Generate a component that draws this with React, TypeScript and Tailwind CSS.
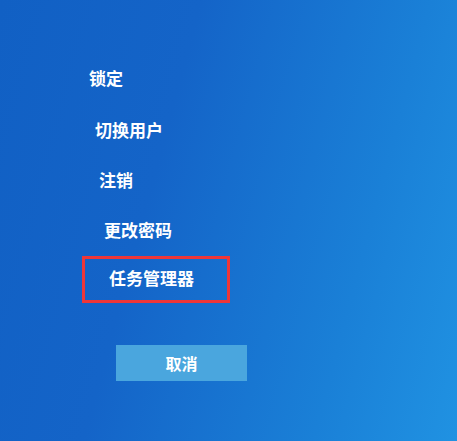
const App = () => {
  return (
    <div
      className="w-[457px] h-[441px] overflow-hidden flex flex-col items-start pt-[69px] text-white text-[17px] leading-[18px] font-semibold bg-[linear-gradient(105deg,#1160c4_0%,#1464c8_35%,#1a80d7_75%,#2092e2_100%)]"
      style={{ fontFamily: "'Noto Sans CJK SC', 'Noto Sans', sans-serif" }}
    >
      <div className="ml-[89px]">锁定</div>
      <div className="ml-[95px] mt-[34px]">切换用户</div>
      <div className="ml-[99px] mt-[32px]">注销</div>
      <div className="ml-[104px] mt-[32px]">更改密码</div>
      <div className="ml-[82px] mt-[17px] w-[148px] h-[47px] border-[3px] border-[#ee3638] pl-[24px] pt-[10px]">
        任务管理器
      </div>
      <button className="ml-[116px] mt-[42px] w-[131px] h-[36px] bg-[#4aa6de] flex items-center justify-center text-[16px] font-bold text-white">
        取消
      </button>
    </div>
  );
};

export default App;
